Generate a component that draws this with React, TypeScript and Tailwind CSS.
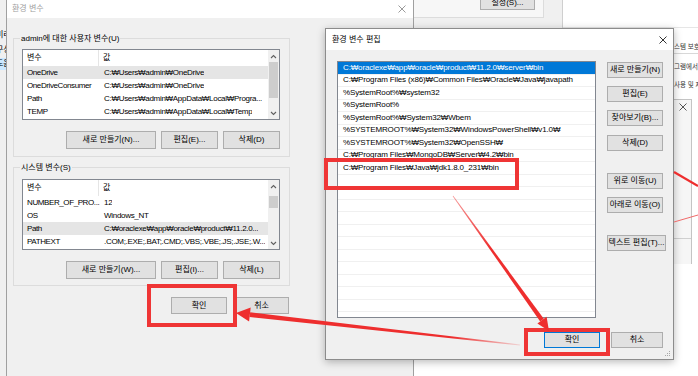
import React from 'react';

const sys = "font-['Liberation_Sans','DejaVu_Sans','Noto_Sans_CJK_KR',sans-serif]";

function CloseX({ color = '#333' }: { color?: string }) {
  return (
    <svg width="8" height="8" viewBox="0 0 8 8">
      <path d="M0.5 0.5 L7.5 7.5 M7.5 0.5 L0.5 7.5" stroke={color} strokeWidth="1" />
    </svg>
  );
}

function Btn({ label, className = '', focused = false }: { label: string; className?: string; focused?: boolean }) {
  return (
    <div
      className={`flex shrink-0 items-center justify-center whitespace-nowrap bg-[#e1e1e1] text-[8px] leading-none text-black ${
        focused ? 'border border-[#0078d7]' : 'border border-[#adadad]'
      } ${className}`}
    >
      {label}
    </div>
  );
}

function Scrollbar({ thumbTop, thumbH }: { thumbTop: number; thumbH: number }) {
  return (
    <div className="flex w-[11px] shrink-0 flex-col bg-[#f0f0f0]">
      <div className="flex h-[12px] items-center justify-center">
        <svg width="7" height="5" viewBox="0 0 7 5">
          <path d="M1 4 L3.5 1.5 L6 4" stroke="#606060" strokeWidth="1.1" fill="none" />
        </svg>
      </div>
      <div className="flex-1">
        <div className="mx-[1px] bg-[#cdcdcd]" style={{ marginTop: thumbTop, height: thumbH }} />
      </div>
      <div className="flex h-[12px] items-center justify-center">
        <svg width="7" height="5" viewBox="0 0 7 5">
          <path d="M1 1 L3.5 3.5 L6 1" stroke="#606060" strokeWidth="1.1" fill="none" />
        </svg>
      </div>
    </div>
  );
}

function VarList({ rows, selected, thumbTop, thumbH }: { rows: [string, string][]; selected: number; thumbTop: number; thumbH: number }) {
  return (
    <div className="flex h-[71px] w-[258px] overflow-hidden border border-[#828790] bg-white">
      <div className="min-w-0 flex-1">
        <div className="flex h-[16px] items-center">
          <div className="flex h-full w-[76px] shrink-0 items-center border-r border-[#e5e5e5] pl-[4px]">변수</div>
          <div className="pl-[4px]">값</div>
        </div>
        {rows.map(([k, v], i) => (
          <div key={i} className={`flex h-[13px] items-center ${i === selected ? 'bg-[#e5e5e5]' : ''}`}>
            <div className="w-[77px] shrink-0 overflow-hidden whitespace-nowrap pl-[4px] tracking-[-0.4px]">{k}</div>
            <div className="min-w-0 overflow-hidden whitespace-nowrap pl-[4px] tracking-[-0.3px]">{v}</div>
          </div>
        ))}
      </div>
      <Scrollbar thumbTop={thumbTop} thumbH={thumbH} />
    </div>
  );
}

const userVars: [string, string][] = [
  ['OneDrive', 'C:₩Users₩admin₩OneDrive'],
  ['OneDriveConsumer', 'C:₩Users₩admin₩OneDrive'],
  ['Path', 'C:₩Users₩admin₩AppData₩Local₩Progra...'],
  ['TEMP', 'C:₩Users₩admin₩AppData₩Local₩Temp'],
  ['TMP', 'C:₩Users₩admin₩AppData₩Local₩Temp'],
];

const sysVars: [string, string][] = [
  ['NUMBER_OF_PRO...', '12'],
  ['OS', 'Windows_NT'],
  ['Path', 'C:₩oraclexe₩app₩oracle₩product₩11.2.0...'],
  ['PATHEXT', '.COM;.EXE;.BAT;.CMD;.VBS;.VBE;.JS;.JSE;.W...'],
];

const paths = [
  'C:₩oraclexe₩app₩oracle₩product₩11.2.0₩server₩bin',
  'C:₩Program Files (x86)₩Common Files₩Oracle₩Java₩javapath',
  '%SystemRoot%₩system32',
  '%SystemRoot%',
  '%SystemRoot%₩System32₩Wbem',
  '%SYSTEMROOT%₩System32₩WindowsPowerShell₩v1.0₩',
  '%SYSTEMROOT%₩System32₩OpenSSH₩',
  'C:₩Program Files₩MongoDB₩Server₩4.2₩bin',
  'C:₩Program Files₩Java₩jdk1.8.0_231₩bin',
];
const pathRows = [...paths, ...Array(13).fill('')];

function LeftDialog() {
  return (
    <div className="absolute left-[6px] top-0 flex h-[376px] w-[408px] flex-col border-x border-[#a0a0a0] bg-[#f0f0f0]">
      <div className="flex h-[18px] shrink-0 items-center justify-between bg-white pl-[5px] pr-[7px]">
        <span className="text-[#a0a0a0]">환경 변수</span>
        <CloseX color="#9a9a9a" />
      </div>
      <fieldset className="ml-[6px] mt-[15px] w-[277px] border border-[#dcdcdc] pb-[7px] pl-[8px] pr-[9px] pt-[5px]">
        <legend className="-ml-[2px] px-[1px] leading-[11px]">admin에 대한 사용자 변수(U)</legend>
        <VarList rows={userVars} selected={0} thumbTop={0} thumbH={36} />
        <div className="mt-[11px] flex justify-end gap-[5px]">
          <Btn label="새로 만들기(N)..." className="h-[18px] w-[90px]" />
          <Btn label="편집(E)..." className="h-[18px] w-[57px]" />
          <Btn label="삭제(D)" className="h-[18px] w-[57px]" />
        </div>
      </fieldset>
      <fieldset className="ml-[6px] mt-[5px] w-[277px] border border-[#dcdcdc] pb-[6px] pl-[8px] pr-[9px] pt-[6px]">
        <legend className="-ml-[2px] px-[1px] leading-[11px]">시스템 변수(S)</legend>
        <VarList rows={sysVars} selected={2} thumbTop={4} thumbH={12} />
        <div className="mt-[11px] flex justify-end gap-[5px]">
          <Btn label="새로 만들기(W)..." className="h-[18px] w-[90px]" />
          <Btn label="편집(I)..." className="h-[18px] w-[57px]" />
          <Btn label="삭제(L)" className="h-[18px] w-[57px]" />
        </div>
      </fieldset>
      <div className="ml-[6px] mt-[11px] flex w-[276px] justify-end gap-[7px]">
        <Btn label="확인" className="h-[17px] w-[56px]" />
        <Btn label="취소" className="h-[17px] w-[55px]" />
      </div>
    </div>
  );
}

function RightDialog() {
  return (
    <div className="absolute left-[325px] top-[28px] flex h-[332px] w-[349px] flex-col border border-[#8c8c8c] bg-[#f0f0f0] shadow-[0_2px_8px_rgba(0,0,0,0.28)]">
      <div className="flex h-[21px] shrink-0 items-center justify-between bg-white pl-[6px] pr-[6px]">
        <span>환경 변수 편집</span>
        <CloseX />
      </div>
      <div className="flex pl-[11px] pt-[11px]">
        <div className="h-[257px] w-[259px] shrink-0 overflow-hidden border border-[#828790] bg-white">
          {pathRows.map((p, i) => (
            <div
              key={i}
              className={`flex h-[12.5px] items-center whitespace-nowrap border-b border-[#f0f0f0] pl-[5px] tracking-[-0.15px] ${
                i === 0 ? 'bg-[#0078d7] text-white' : ''
              }`}
            >
              {p}
            </div>
          ))}
        </div>
        <div className="ml-[11px] flex flex-col pt-[1px]">
          <Btn label="새로 만들기(N)" className="h-[16px] w-[56px]" />
          <Btn label="편집(E)" className="mt-[8px] h-[16px] w-[56px]" />
          <Btn label="찾아보기(B)..." className="mt-[8px] h-[16px] w-[56px]" />
          <Btn label="삭제(D)" className="mt-[9px] h-[16px] w-[56px]" />
          <Btn label="위로 이동(U)" className="mt-[22px] h-[16px] w-[56px]" />
          <Btn label="아래로 이동(O)" className="mt-[8px] h-[16px] w-[56px]" />
          <Btn label="텍스트 편집(T)..." className="mt-[22px] h-[16px] w-[59px]" />
        </div>
      </div>
      <div className="relative mt-[14px] flex justify-end gap-[11px] pr-[10px]">
        <Btn label="확인" focused className="h-[16px] w-[56px]" />
        <Btn label="취소" className="h-[16px] w-[52px]" />
      </div>
      <div className="mt-auto flex justify-end pb-[2px] pr-[2px]">
        <svg width="6" height="6" viewBox="0 0 6 6" fill="#a8a8a8">
          <rect x="4" y="0" width="1" height="1" />
          <rect x="2" y="2" width="1" height="1" />
          <rect x="4" y="2" width="1" height="1" />
          <rect x="0" y="4" width="1" height="1" />
          <rect x="2" y="4" width="1" height="1" />
          <rect x="4" y="4" width="1" height="1" />
        </svg>
      </div>
    </div>
  );
}

function Background() {
  return (
    <>
      <div className="absolute left-0 top-0 flex h-[376px] w-[6px] flex-col overflow-hidden bg-[#f0f0f0] text-[8px] leading-none">
        <div className="ml-[-4px] mt-[31px] whitespace-nowrap">미리</div>
        <div className="ml-[-4px] mt-[7px] whitespace-nowrap">구성</div>
        <div className="ml-[-4px] mt-[4px] whitespace-nowrap bg-[#cce8ff] py-[2px]">도움</div>
      </div>
      <div className="absolute left-[414px] top-0 flex h-[28px] w-[284px]">
        <div className="h-full w-[149px] border-r border-[#cfcfcf] bg-[#f0f0f0]">
          <div className="flex h-[18px] w-[130px] justify-end border-b border-r border-[#dcdcdc] bg-[#f7f7f7] pr-[8px]">
            <Btn label="설정(S)..." className="-mt-[4px] h-[14px] w-[55px]" />
          </div>
        </div>
        <div className="flex-1 border-b border-[#e6e6e6] bg-white" />
      </div>
      <div className="absolute left-[674px] top-[28px] h-[348px] w-[24px] overflow-hidden bg-white text-[6.5px] leading-none text-[#333]">
        <div className="mt-[16px] whitespace-nowrap border-b border-[#d8d8d8] pb-[2px]">스템 보호</div>
        <div className="mt-[10px] whitespace-nowrap">그램에서</div>
        <div className="mt-[12px] whitespace-nowrap">사용 및 제</div>
        <div className="mt-[10px] flex h-[165px] w-[18px] flex-col border-r border-t border-[#c4c4c4] bg-[#f6f6f6]">
          <div className="flex h-[14px] items-center justify-end pr-[4px]">
            <CloseX color="#555" />
          </div>
          <div className="mt-[124px] border-t border-[#d0d0d0]" />
        </div>
      </div>
    </>
  );
}

function Overlay() {
  return (
    <>
      <div className="absolute left-[324px] top-[158px] h-[32px] w-[195px] border-[4px] border-[#ef3535]" />
      <div className="absolute left-[524px] top-[328px] h-[28px] w-[86px] border-[4px] border-[#ef3535]" />
      <div className="absolute left-[147px] top-[284px] h-[43px] w-[90px] border-[4px] border-[#ef3535]" />
      <svg className="pointer-events-none absolute left-0 top-0" width="698" height="376" viewBox="0 0 698 376">
        <defs>
          <linearGradient id="fade1" x1="250" y1="0" x2="520" y2="0" gradientUnits="userSpaceOnUse">
            <stop offset="0" stopColor="#ee2e2e" />
            <stop offset="0.75" stopColor="#ee2e2e" />
            <stop offset="1" stopColor="#ee2e2e" stopOpacity="0.15" />
          </linearGradient>
          <linearGradient id="fade2" x1="0" y1="196" x2="0" y2="330" gradientUnits="userSpaceOnUse">
            <stop offset="0" stopColor="#ee2e2e" stopOpacity="0.5" />
            <stop offset="0.4" stopColor="#ee2e2e" />
            <stop offset="1" stopColor="#ee2e2e" />
          </linearGradient>
        </defs>
        {/* arrow to the left 확인 */}
        <polygon points="520.1,344.4 519.9,345.6 249.6,317 250.2,312.2" fill="url(#fade1)" />
        <polygon points="236,313 250.7,307.6 249.1,321.6" fill="#ee2e2e" />
        {/* arrow down to the right 확인 */}
        <polygon points="453.3,195.8 452.7,196.2 540.2,321.6 543.8,318.8" fill="url(#fade2)" />
        <polygon points="549,331 546.6,316.8 537.4,323.4" fill="#ee2e2e" />
        {/* background lines on the far right */}
        <line x1="674" y1="172" x2="698" y2="186" stroke="#ee2e2e" strokeWidth="2.2" />
        <line x1="674" y1="222" x2="698" y2="215" stroke="#f06a6a" strokeWidth="1" />
      </svg>
    </>
  );
}

export default function App() {
  return (
    <div className={`relative h-[376px] w-[698px] overflow-hidden bg-white text-[8px] leading-none text-black ${sys}`}>
      <Background />
      <LeftDialog />
      <RightDialog />
      <Overlay />
    </div>
  );
}
